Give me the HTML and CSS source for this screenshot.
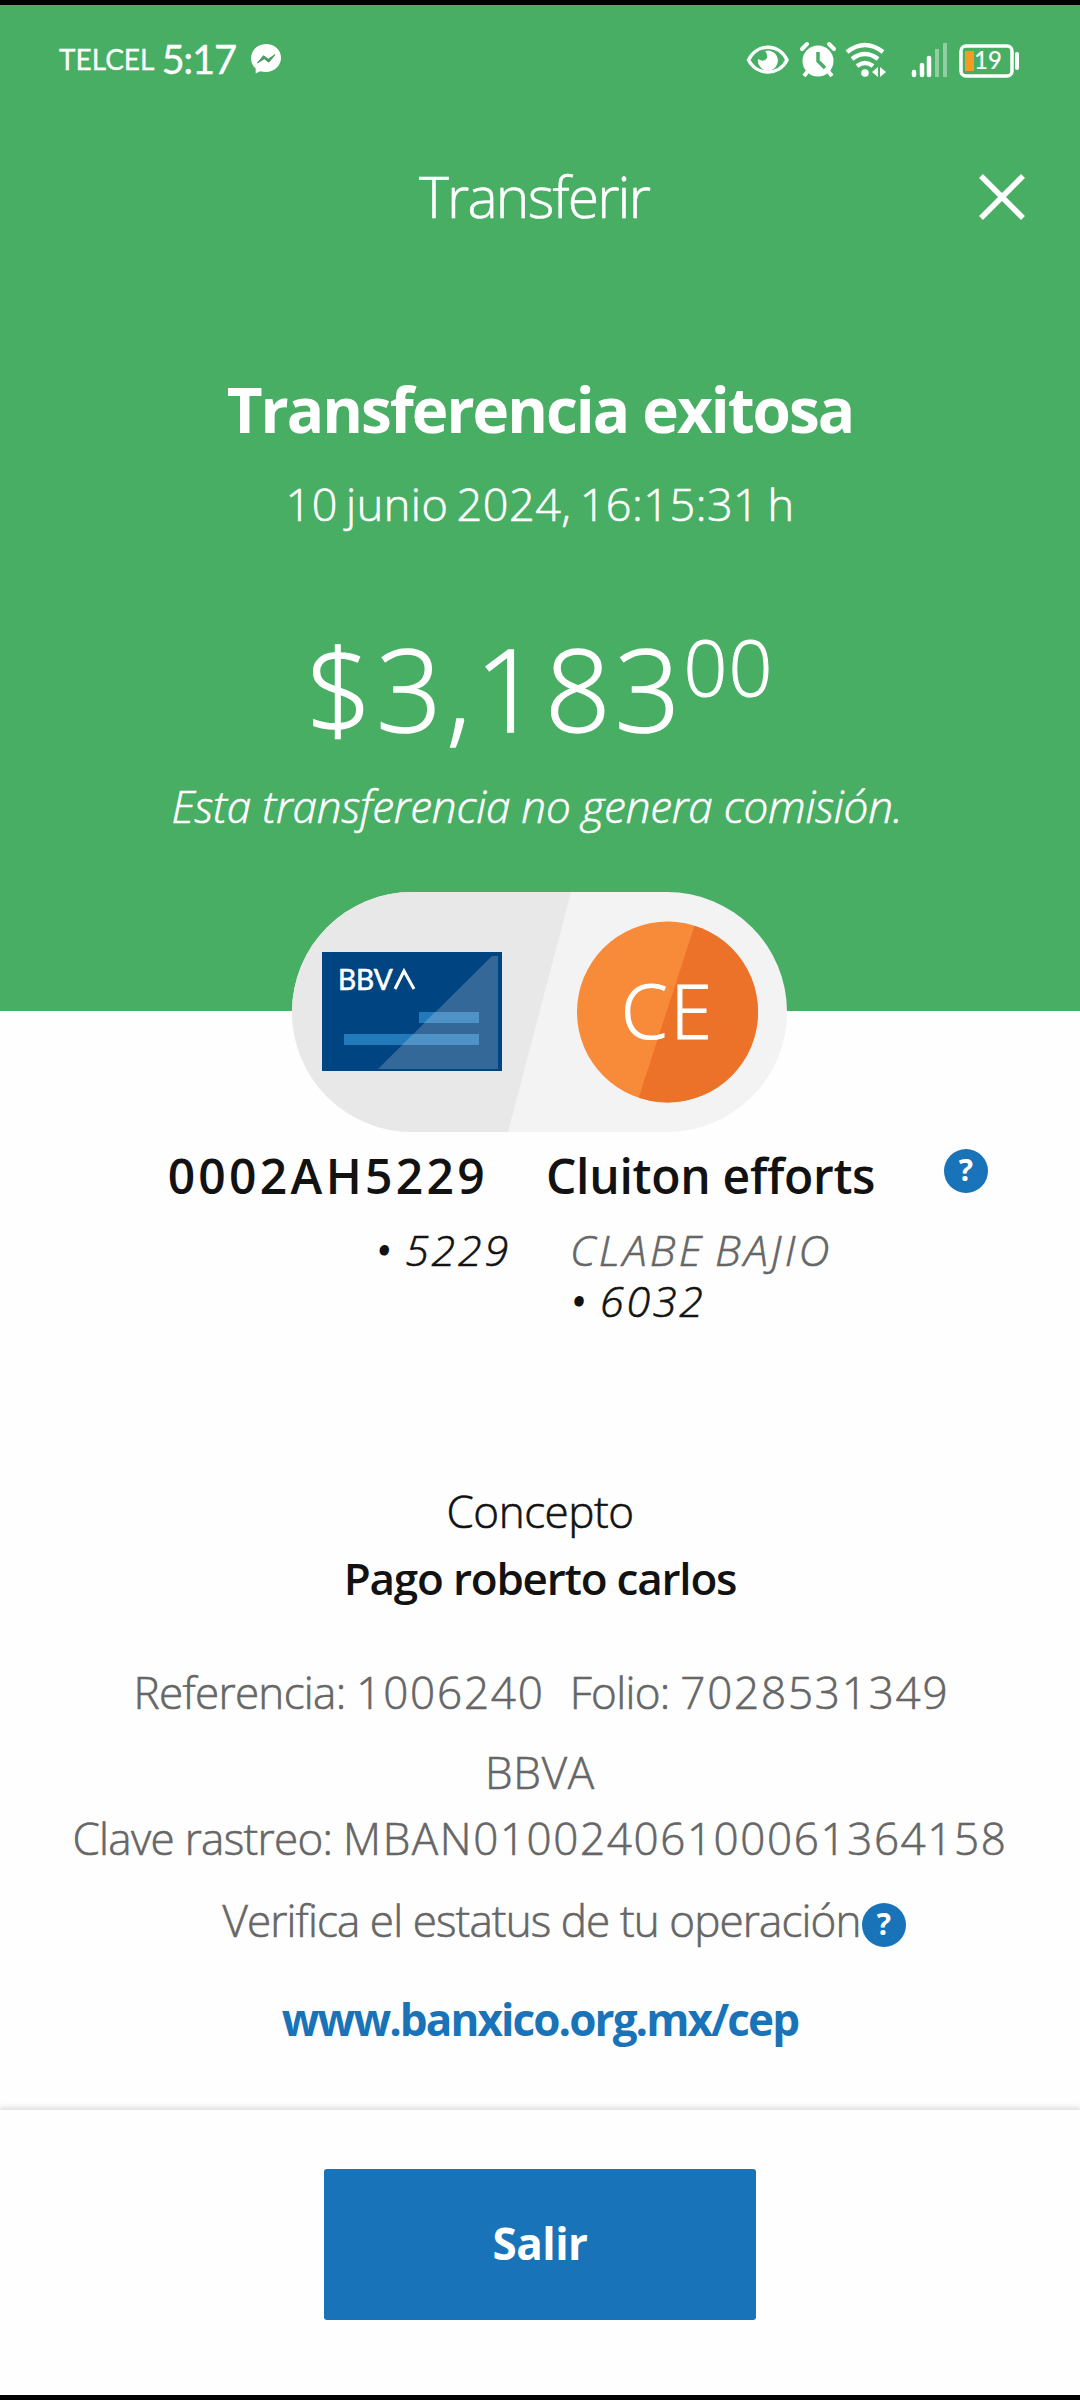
FILE: index.html
```html
<!DOCTYPE html>
<html lang="es">
<head>
    <meta charset="UTF-8">
    <title>Transferir</title>
    <link rel="stylesheet" href="styles.css">
</head>
<body>
<header class="hero">
    <div class="status-bar">
        <div class="status-left">
            <span class="carrier">TELCEL</span>
            <span class="clock">5:17</span>
            <svg class="messenger" viewBox="0 0 30 30">
                <path d="M15 0C6.500 0 0 6.200 0 14.300c0 4.200 1.800 7.800 4.700 10.300v5l4.500-2.400c1.800.5 3.700.8 5.800.8 8.500 0 15-6.200 15-14.200S23.500 0 15 0z" fill="#fff"/>
                <path d="M6.500 19l6-7.300 4.700 3.500 6.800-4.500-6.200 7.500-4.600-3.500z" fill="#4a9a62" stroke="#4a9a62"/>
            </svg>
        </div>
        <svg class="status-icons" viewBox="0 0 280 40">
            <!-- eye -->
            <path d="M3.500 21C12 4 34 4 42 21C34 37 12 37 3.500 21z" fill="none" stroke="#fff" stroke-width="3.500"/>
            <path d="M20 12a10 10 0 1 1-7 8q6 4 9-1 1-4-2-7z" fill="#fff"/>
            <!-- alarm -->
            <circle cx="73" cy="22" r="15.500" fill="#fff"/>
            <path d="M57 10l5-5M89 10l-5-5" stroke="#fff" stroke-width="4" stroke-linecap="round"/>
            <path d="M63 32l-4 5M83 32l4 5" stroke="#fff" stroke-width="4"/>
            <path d="M73 13v9l7 7" fill="none" stroke="#48ae64" stroke-width="3.500"/>
            <!-- wifi -->
            <path d="M102 13q18-14 36 0M107 20q13-10 26 0M112 27q8-6 16 0" fill="none" stroke="#fff" stroke-width="4.500"/>
            <circle cx="120" cy="34" r="3.800" fill="#fff"/>
            <path d="M133 28v10l-6-5zM135 28v10l6-5z" fill="#fff"/>
            <!-- signal -->
            <path d="M169 33v3M177 26v10M184 19v17" stroke="#fff" stroke-width="4.500" stroke-linecap="round"/>
            <path d="M192 10v28M200 4v34" stroke="#fff" stroke-opacity=".4" stroke-width="4"/>
            <!-- battery -->
            <rect x="216" y="7" width="51" height="30" rx="5" fill="none" stroke="#fff" stroke-width="3.500"/>
            <rect x="220" y="12" width="9" height="20" rx="1" fill="#f59a23"/>
            <path d="M272 15v14" stroke="#fff" stroke-width="4" stroke-linecap="round"/>
            <text class="battery-level" x="229" y="30">19</text>
        </svg>
    </div>
    <div class="title-bar">
        <span class="screen-title">Transferir</span>
        <svg class="close" viewBox="0 0 46 46">
            <path d="M2 2l42 42M44 2L2 44" stroke="#fff" stroke-width="5.500"/>
        </svg>
    </div>
    <h1>Transferencia exitosa</h1>
    <p class="date">10 junio 2024, 16:15:31 h</p>
    <p class="amount">$3,183<span class="cents">00</span></p>
    <p class="fee">Esta transferencia no genera comisión.</p>
</header>
<main class="detail">
    <svg class="parties" viewBox="0 0 495 240">
        <defs>
            <clipPath id="pill"><rect width="495" height="240" rx="120"/></clipPath>
            <clipPath id="avatar"><circle cx="375.500" cy="120" r="90.500"/></clipPath>
        </defs>
        <g clip-path="url(#pill)">
            <rect width="495" height="240" fill="#f3f3f3"/>
            <path d="M0 0h279l-63 240H0z" fill="#e8e8e8"/>
        </g>
        <rect x="30" y="60" width="180" height="119" fill="#004481"/>
        <path d="M206 64v113H86L200 64z" fill="#336899"/>
        <path d="M127 120h60v11h-60zM52 142h135v11H52z" fill="#237aba"/>
        <path d="M143 120h44v11h-55zM121 142h66v11h-77z" fill="#4f93c6"/>
        <text class="card-logo" x="46" y="98">BBV</text>
        <path d="M103 97l9-18 10 18" fill="none" stroke="#fff" stroke-width="3"/>
        <g clip-path="url(#avatar)">
            <rect x="285" y="29" width="181" height="182" fill="#f78b3a"/>
            <path d="M404 29h62v182H345z" fill="#ec722a"/>
        </g>
        <text class="initials" x="329" y="147">CE</text>
    </svg>
    <div class="names">
        <strong class="from">0002AH5229</strong>
        <strong class="to">Cluiton efforts</strong>
        <svg class="help" viewBox="0 0 44 44"><circle cx="22" cy="22" r="22"/><text x="22" y="32">?</text></svg>
    </div>
    <div class="accounts">
        <div><span class="bullet">•</span> 5229</div>
        <div>
            <div class="bank">CLABE BAJIO</div>
            <div><span class="bullet">•</span> 6032</div>
        </div>
    </div>
    <p class="label">Concepto</p>
    <p class="concept">Pago roberto carlos</p>
    <p class="reference">
        <span>Referencia: <span class="digits">1006240</span></span>
        <span>Folio: <span class="digits">7028531349</span></span>
    </p>
    <p class="issuer">BBVA</p>
    <p class="tracking">Clave rastreo: <span class="digits">MBAN01002406100061364158</span></p>
    <p class="verify">Verifica el estatus de tu operación<svg class="help" viewBox="0 0 44 44"><circle cx="22" cy="22" r="22"/><text x="22" y="32">?</text></svg></p>
    <p class="link">www.banxico.org.mx/cep</p>
</main>
<footer class="actions">
    <button class="exit">Salir</button>
</footer>
</body>
</html>
```
FILE: styles.css
```css
* {
    box-sizing: border-box;
}

body {
    margin: 0;
    height: 2400px;
    display: flex;
    flex-direction: column;
    border-top: 5px solid #000;
    border-bottom: 5px solid #000;
    background-color: #fefefe;
    color: #121212;
    font-family: "Open Sans", sans-serif;
    font-size: 44px;
    font-weight: 300;
    line-height: 60px;
    /* light weight is a bit too thin on its own */
    -webkit-text-stroke: .6px;
}

p, h1 {
    margin: 0;
    text-align: center;
    white-space: nowrap;
}

h1, strong, .concept, .link, .exit, .help text, .battery-level {
    -webkit-text-stroke: 0;
}

.hero {
    height: 1006px;
    background-color: #48ae64;
    color: #fff;
}

.status-bar {
    display: flex;
    justify-content: space-between;
    align-items: center;
    height: 108px;
    padding: 0 55px 0 59px;
}

.status-left {
    display: flex;
    align-items: center;
    font-family: Lato, sans-serif;
    font-weight: 400;
    -webkit-text-stroke: .3px;
}

.carrier {
    font-size: 28px;
    margin-right: 7px;
}

.clock {
    font-size: 40px;
    letter-spacing: -1.3px;
    margin-right: 15px;
}

.messenger {
    width: 30px;
    height: 30px;
}

.status-icons {
    width: 280px;
    height: 40px;
}

.battery-level {
    font: 500 24px Lato, sans-serif;
    fill: #fff;
}

.title-bar {
    position: relative;
    display: flex;
    align-items: center;
    justify-content: center;
    height: 168px;
    padding: 0 12px 3px 0;
}

.screen-title {
    font-size: 57px;
    letter-spacing: -1.8px;
}

.close {
    position: absolute;
    right: 55px;
    top: 61px;
    width: 46px;
    height: 46px;
}

h1 {
    margin-top: 86px;
    font-size: 62px;
    font-weight: 700;
    line-height: 84px;
    letter-spacing: -2px;
}

.date {
    margin-top: 23px;
    font-size: 45px;
    letter-spacing: .5px;
    word-spacing: -4px;
}

.amount {
    display: flex;
    justify-content: center;
    margin-top: 84px;
    font-size: 115px;
    line-height: 140px;
    letter-spacing: 4.2px;
    -webkit-text-stroke: 1.5px;
}

.cents {
    margin-left: -1px;
    font-size: 77px;
    line-height: 97px;
    letter-spacing: 1px;
    -webkit-text-stroke: 1px;
}

.fee {
    margin-top: 18px;
    padding-right: 6px;
    font-style: italic;
    letter-spacing: -.2px;
}

.detail {
    display: flex;
    flex-direction: column;
}

.parties {
    align-self: center;
    width: 495px;
    height: 240px;
    margin: -119px 1px 0 0;
}

.card-logo {
    font: 400 28px Lato, sans-serif;
    fill: #fff;
    stroke: #fff;
    stroke-width: .6px;
}

.initials {
    font-size: 75px;
    letter-spacing: 3px;
    fill: #fff;
    stroke: #fff;
    stroke-width: 1.2px;
}

.names {
    display: grid;
    grid-template-columns: 488px 396px 104px;
    margin-top: 11px;
    font-size: 48px;
    line-height: 66px;
}

.names strong {
    font-weight: 600;
}

.names .from {
    text-align: right;
    letter-spacing: 3.3px;
}

.names .to {
    padding-left: 58px;
    letter-spacing: -.3px;
}

.help {
    width: 44px;
    height: 44px;
    fill: #1973b8;
}

.names .help {
    margin: 6px 0 0 60px;
}

.help text {
    font-size: 30px;
    font-weight: 700;
    letter-spacing: 0;
    text-anchor: middle;
    fill: #fff;
}

.accounts {
    display: grid;
    grid-template-columns: 511px 1fr;
    column-gap: 59px;
    margin-top: 15px;
    font-size: 43px;
    font-style: italic;
    line-height: 51px;
    letter-spacing: 2.8px;
}

.accounts > div:first-child {
    text-align: right;
}

.bullet {
    margin-right: -3px;
    -webkit-text-stroke: 3px;
}

.bank {
    color: #666;
    letter-spacing: 3.2px;
    word-spacing: -4px;
}

.label {
    margin-top: 155px;
    letter-spacing: -.5px;
}

.concept {
    margin-top: 7px;
    font-weight: 600;
    letter-spacing: -1.2px;
}

.reference {
    display: flex;
    justify-content: center;
    column-gap: 25px;
    margin-top: 54px;
    padding-left: 3px;
    color: #666;
    letter-spacing: -.7px;
}

.digits {
    letter-spacing: 1.8px;
}

.issuer {
    margin-top: 20px;
    color: #666;
    letter-spacing: .8px;
}

.tracking {
    margin-top: 6px;
    color: #666;
    letter-spacing: -.7px;
}

.tracking .digits {
    letter-spacing: 1.6px;
}

.verify {
    display: flex;
    justify-content: center;
    align-items: center;
    margin-top: 22px;
    padding-left: 49px;
    color: #666;
    letter-spacing: -.9px;
}

.verify .help {
    margin: 10px 0 0 2px;
}

.link {
    margin-top: 39px;
    color: #1973b8;
    font-weight: 700;
    letter-spacing: -1.9px;
}

.actions {
    margin-top: auto;
    height: 285px;
    padding-top: 59px;
    text-align: center;
    box-shadow: 0 -3px 5px rgba(0, 0, 0, .12);
}

.exit {
    width: 432px;
    height: 151px;
    padding-bottom: 4px;
    border: 0;
    border-radius: 3px;
    background-color: #1973b8;
    color: #fff;
    font: 700 44px "Open Sans", sans-serif;
    letter-spacing: -.5px;
}
```
